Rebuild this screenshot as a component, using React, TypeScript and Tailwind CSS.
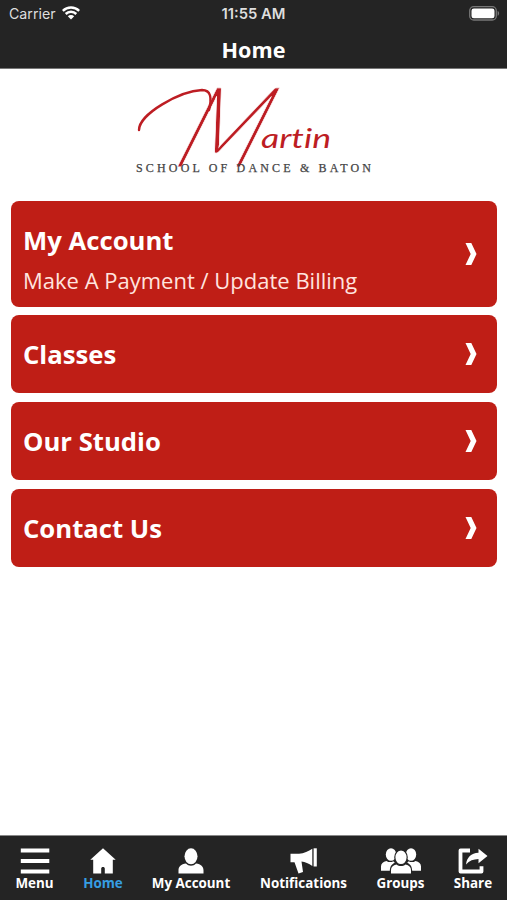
import type { ReactNode } from 'react';

interface MenuItem {
  title: string;
  subtitle?: string;
}

interface Tab {
  label: string;
  icon: ReactNode;
  width: string;
  active?: boolean;
}

const menuItems: MenuItem[] = [
  { title: 'My Account', subtitle: 'Make A Payment / Update Billing' },
  { title: 'Classes' },
  { title: 'Our Studio' },
  { title: 'Contact Us' },
];

const tabs: Tab[] = [
  {
    label: 'Menu',
    width: 'w-[69px]',
    icon: (
      <svg width="30" height="26" viewBox="0 0 30 26" fill="currentColor">
        <path d="M.8.5h28.500v4H.8zM.8 11h28.500v4H.8zM.8 21.500h28.500v4H.8z" />
      </svg>
    ),
  },
  {
    label: 'Home',
    width: 'w-[68px]',
    active: true,
    icon: (
      <svg width="26" height="26" viewBox="0 0 26 26" fill="currentColor">
        <path d="M13 .3 .3 11.800h2.900V25.500h8V20.500c0-1 .6-1.600 1.800-1.600s1.800.6 1.800 1.600v5h8V11.800h2.900z" />
      </svg>
    ),
  },
  {
    label: 'My Account',
    width: 'w-[108px]',
    icon: (
      <svg width="26" height="26" viewBox="0 0 26 26" fill="currentColor">
        <ellipse cx="13" cy="8.300" rx="6.500" ry="8" />
        <path d="M.5 25.500v-3c0-4 2.500-6.500 7.500-7 1.500 1.500 3 2.200 5 2.200s3.500-.7 5-2.200c5 .5 7.500 3 7.500 7v3z" />
      </svg>
    ),
  },
  {
    label: 'Notifications',
    width: 'w-[117px]',
    icon: (
      <svg width="28" height="26" viewBox="0 0 28 26" fill="currentColor">
        <path d="M.5 5.800h8.500C14 5.300 18.500 3.500 22.300.8v17.200c-3.500-2.500-7.200-4-10.800-4.500l1.500 10.500-4.500 1.500L4.500 14.200H.5z" />
        <path d="M23.600.3h3.200v18.200h-3.200z" />
      </svg>
    ),
  },
  {
    label: 'Groups',
    width: 'w-[77px]',
    icon: (
      <svg width="40" height="26" viewBox="0 0 40 26" fill="currentColor">
        <ellipse cx="10" cy="6.500" rx="5.200" ry="6.300" />
        <ellipse cx="30" cy="6.500" rx="5.200" ry="6.300" />
        <path d="M0 22.800v-4.300c0-3 2-5 5.500-5.600 2 1.500 5 1.500 6.800.3l1.500 1.600c-3 1.400-4.700 3.500-5 8zM40 22.800v-4.300c0-3-2-5-5.500-5.600-2 1.500-5 1.500-6.800.3l-1.500 1.600c3 1.400 4.700 3.500 5 8z" />
        <ellipse cx="20" cy="9.300" rx="6.200" ry="7.400" stroke="#242424" strokeWidth="1.200" />
        <path d="M10 25.500v-3.500c0-3 2-5 5.500-5.600 2.500 2 6.500 2 9 0 3.500.6 5.500 2.600 5.500 5.600v3.500z" />
      </svg>
    ),
  },
  {
    label: 'Share',
    width: 'w-[68px]',
    icon: (
      <svg width="30" height="26" viewBox="0 0 30 26">
        <path d="M12 2.500H2.500v21h21v-5.300" fill="none" stroke="currentColor" strokeWidth="3.800" strokeLinejoin="round" />
        <path d="M20.500.8 29.500 8l-9 7.200v-4.200c-5 .2-9.200 1.600-12.500 5.500C9 9.200 13 5.200 20.500 4.800z" fill="currentColor" />
      </svg>
    ),
  },
];

function StatusBar() {
  return (
    <div className="grid h-7 grid-cols-3 items-center px-[9px] font-[Inter] text-[14.200px] text-[#dedede]">
      <div className="flex items-center gap-[6px]">
        <span>Carrier</span>
        <svg className="-mt-0.5" width="18" height="14" viewBox="0 0 18 14" fill="none" stroke="#fff" strokeWidth="2.500">
          <path d="M.8 4.900a11.700 11.700 0 0 1 16.400 0M3.700 8a7.500 7.500 0 0 1 10.600 0" />
          <path d="M9 13.500 5.800 10.300a4.500 4.500 0 0 1 6.400 0z" fill="#fff" stroke="none" />
        </svg>
      </div>
      <div className="text-center text-[14.800px] font-semibold whitespace-nowrap">11:55 AM</div>
      <svg className="mt-[-2px] mr-[-2px] justify-self-end" width="31" height="15" viewBox="0 0 31 15">
        <rect x=".7" y=".7" width="26.600" height="13.300" rx="4" fill="none" stroke="#777" strokeWidth="1.300" />
        <rect x="2.500" y="2.500" width="23" height="9.700" rx="2.300" fill="#fff" />
        <path d="M28.600 5c2 .7 2 4 0 4.800z" fill="#777" />
      </svg>
    </div>
  );
}

function Logo() {
  return (
    <svg className="block overflow-visible" width="240" height="100" viewBox="0 0 240 100">
      <g fill="#bd1d23">
        <text
          transform="matrix(.8 0 -.5 1 34 87)"
          fontFamily="Lato, sans-serif"
          fontWeight="300"
          fontSize="112"
          stroke="#fff"
          strokeWidth=".8"
        >
          M
        </text>
        {/* Entry flourish leading into the initial */}
        <path
          d="M5 50C5 34 46 11 68 10c9 0 10 8 7 20"
          fill="none"
          stroke="#bd1d23"
          strokeWidth="2.400"
          strokeLinecap="round"
        />
        <text
          x="127"
          y="68"
          fontFamily="Lato, sans-serif"
          fontStyle="italic"
          fontSize="27"
          textLength="70"
          lengthAdjust="spacingAndGlyphs"
          style={{ fontVariantLigatures: 'none' }}
        >
          artin
        </text>
      </g>
      <text
        x="2"
        y="92"
        fontFamily="Liberation Serif, serif"
        fontSize="12"
        fill="#444"
        stroke="#444"
        strokeWidth=".25"
        textLength="235"
      >
        SCHOOL OF DANCE &amp; BATON
      </text>
    </svg>
  );
}

function MenuCard({ title, subtitle }: MenuItem) {
  return (
    <button
      className={`flex w-full items-center justify-between rounded-lg bg-[#bf1e16] pr-5 pl-3 text-left text-white ${
        subtitle ? 'h-[106px]' : 'h-[78px]'
      }`}
    >
      <div className={subtitle ? 'pt-[13px]' : 'pt-0.5'}>
        <div className="text-[25.700px] leading-[34px] font-bold">{title}</div>
        {subtitle && (
          <div className="mt-[5px] text-[22px] leading-[34px] text-[#ffe4df]">{subtitle}</div>
        )}
      </div>
      <svg width="12" height="22" viewBox="0 0 12 22" fill="currentColor">
        <path d="M.5 0h5.800l5.200 11-5.200 11H.5l5.200-11z" />
      </svg>
    </button>
  );
}

export default function App() {
  return (
    <div className="flex h-[900px] w-[507px] flex-col overflow-hidden bg-white font-['Open_Sans',sans-serif]">
      <header className="h-[69px] shrink-0 border-b border-[#777] bg-[#242424]">
        <StatusBar />
        <h1 className="mt-[6px] text-center text-[21.600px] leading-8 font-bold text-white">Home</h1>
      </header>

      <main className="flex-1">
        <div className="flex h-[131.500px] justify-center pt-[11px]">
          <Logo />
        </div>
        <div className="flex flex-col gap-[8.700px] pr-[10px] pl-[11px]">
          {menuItems.map((item) => (
            <MenuCard key={item.title} {...item} />
          ))}
        </div>
      </main>

      <nav className="flex h-[65px] shrink-0 border-t border-[#888] bg-[#242424] text-white">
        {tabs.map((tab) => (
          <button key={tab.label} className={`flex shrink-0 flex-col items-center pt-3 ${tab.width}`}>
            {tab.icon}
            <span
              className={`text-[13.400px] leading-[18px] font-bold whitespace-nowrap ${
                tab.active ? 'text-[#369de2]' : ''
              }`}
            >
              {tab.label}
            </span>
          </button>
        ))}
      </nav>
    </div>
  );
}
